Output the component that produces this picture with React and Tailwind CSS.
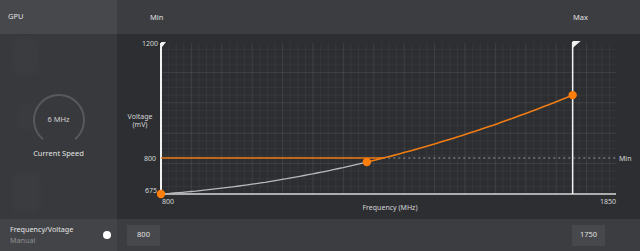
import React from "react";

const FONT = { fontFamily: '"Noto Sans", "Liberation Sans", Arial, sans-serif' };

// chart geometry (px inside the chart panel)
const X0 = 44;
const X1 = 499;
const Y0 = 160;
const Y1 = 9;
const fx = (f) => X0 + ((f - 800) / 1050) * (X1 - X0);
const vy = (v) => Y0 - ((v - 675) / 525) * (Y0 - Y1);
const volt = (f) => {
  const d = f - 800;
  return 675 + 0.1054 * d + 0.00027 * d * d;
};

function curvePoints(from, to) {
  const pts = [];
  for (let f = from; f <= to + 0.1; f += 10) {
    pts.push(`${fx(f).toFixed(1)},${vy(volt(f)).toFixed(1)}`);
  }
  return pts.join(" ");
}

function Grid() {
  const lines = [];
  const step = 7.6;
  let i = 0;
  for (let x = X0 + step; x < X1; x += step, i++) {
    lines.push(
      <line key={"v" + i} x1={x} y1={Y1} x2={x} y2={Y0} stroke="#ffffff" strokeOpacity={i % 4 === 3 ? 0.085 : 0.045} strokeWidth="1" />
    );
  }
  i = 0;
  for (let y = Y0 - step; y > Y1; y -= step, i++) {
    lines.push(
      <line key={"h" + i} x1={X0} y1={y} x2={X1} y2={y} stroke="#ffffff" strokeOpacity={i % 4 === 3 ? 0.085 : 0.045} strokeWidth="1" />
    );
  }
  return <g>{lines}</g>;
}

function Chart() {
  const pMid = { x: fx(1275), y: vy(volt(1275)) };
  const pMax = { x: fx(1750), y: vy(volt(1750)) };
  const minY = vy(800);
  const cross = fx(1313);
  return (
    <svg width="523" height="185" viewBox="0 0 523 185" style={FONT}>
      <Grid />
      {/* axes */}
      <line x1={X0} y1={Y1} x2={X0} y2={Y0 + 1} stroke="#f2f2f2" strokeWidth="2" />
      <line x1={X0} y1={Y0} x2={X1} y2={Y0} stroke="#d8d8d8" strokeWidth="1.5" />
      <polygon points={`${X0},${Y1 - 1} ${X0 + 5},${Y1 - 1} ${X0 + 1},${Y1 + 4}`} fill="#f2f2f2" />
      {/* max line */}
      <line x1={pMax.x} y1={Y1 - 1} x2={pMax.x} y2={Y0} stroke="#f2f2f2" strokeWidth="1.5" />
      <polygon points={`${pMax.x},${Y1 - 2} ${pMax.x + 8},${Y1 - 2} ${pMax.x},${Y1 + 5}`} fill="#f2f2f2" />
      {/* min voltage line */}
      <line x1={X0} y1={minY} x2={cross} y2={minY} stroke="#f07d14" strokeWidth="1.5" />
      <line x1={cross} y1={minY} x2={X1} y2={minY} stroke="#9a9ca0" strokeWidth="1" strokeDasharray="2 3" />
      {/* curve */}
      <polyline points={curvePoints(800, 1275)} fill="none" stroke="#b8b9bc" strokeWidth="1.3" />
      <polyline points={curvePoints(1275, 1750)} fill="none" stroke="#f07d14" strokeWidth="1.6" />
      <circle cx={X0} cy={Y0} r="4.2" fill="#ff7f0a" />
      <circle cx={pMid.x} cy={pMid.y} r="4.2" fill="#ff7f0a" />
      <circle cx={pMax.x} cy={pMax.y} r="4.2" fill="#ff7f0a" />
      {/* labels */}
      <g fill="#d6d6d6" fontSize="7">
        <text x={X0 - 3} y={Y1 + 3} textAnchor="end">1200</text>
        <text x={X0 - 5} y={minY + 2.5} textAnchor="end">800</text>
        <text x={X0 - 4} y={Y0 - 1} textAnchor="end">675</text>
        <text x="23" y="85" textAnchor="middle">Voltage</text>
        <text x="23" y="93" textAnchor="middle">(mV)</text>
        <text x={X0 + 1} y="170">800</text>
        <text x={X1} y="170" textAnchor="end">1850</text>
        <text x="273" y="176" textAnchor="middle">Frequency (MHz)</text>
        <text x={X1 + 3} y={minY + 2.5}>Min</text>
      </g>
    </svg>
  );
}

function Gauge() {
  // open arc, gap at the bottom
  const r = 25;
  const a0 = (130 * Math.PI) / 180;
  const a1 = (50 * Math.PI) / 180;
  const sx = 30 + r * Math.cos(a0);
  const sy = 30 + r * Math.sin(a0);
  const ex = 30 + r * Math.cos(a1);
  const ey = 30 + r * Math.sin(a1);
  return (
    <svg width="60" height="60" viewBox="0 0 60 60" className="absolute inset-0">
      <path d={`M ${sx} ${sy} A ${r} ${r} 0 1 1 ${ex} ${ey}`} fill="none" stroke="#58595d" strokeWidth="2" />
    </svg>
  );
}

export default function App() {
  return (
    <div className="w-[640px] h-[251px] flex flex-col bg-[#2c2e32] text-[#d8d8d8] overflow-hidden" style={FONT}>
      {/* header */}
      <div className="h-[34px] flex">
        <div className="w-[117px] bg-[#47484c] flex items-center px-2 text-[7.5px] text-[#e0e0e0]">GPU</div>
        <div className="flex-1 bg-[#3c3d41] relative text-[7.5px] text-[#e0e0e0]">
          <span className="absolute left-[33px] top-[12px]">Min</span>
          <span className="absolute left-[456px] top-[12px]">Max</span>
        </div>
      </div>

      {/* body */}
      <div className="h-[185px] flex">
        <div className="w-[117px] bg-[#38393d] relative flex flex-col items-center pt-[56px]">
          <div className="absolute left-[13px] top-[4px] w-[26px] h-[36px] bg-white/[0.018] blur-[4px]" />
          <div className="absolute left-[15px] top-[68px] w-[22px] h-[30px] bg-white/[0.012] blur-[4px]" />
          <div className="absolute left-[12px] top-[140px] w-[28px] h-[38px] bg-white/[0.018] blur-[4px]" />
          <div className="relative w-[60px] h-[60px] flex items-center justify-center">
            <Gauge />
            <span className="text-[7.5px] text-[#cfcfcf]">6 MHz</span>
          </div>
          <div className="mt-[-2px] text-[7.5px] text-[#e2e2e2]">Current Speed</div>
        </div>
        <div className="flex-1">
          <Chart />
        </div>
      </div>

      {/* footer */}
      <div className="flex-1 flex">
        <div className="w-[117px] bg-[#434448] flex items-center justify-between pl-[10px] pr-[6px]">
          <div className="flex flex-col leading-[11px]">
            <span className="text-[7.2px] text-[#e4e4e4]">Frequency/Voltage</span>
            <span className="text-[7.2px] text-[#8e8f92]">Manual</span>
          </div>
          <div className="w-[8px] h-[8px] rounded-full bg-white" />
        </div>
        <div className="flex-1 bg-[#3c3d41] flex items-center justify-between pl-[10px] pr-[35px]">
          <div className="w-[33px] h-[21px] bg-[#47484c] flex items-center justify-center text-[7.5px] text-[#e0e0e0]">800</div>
          <div className="w-[33px] h-[21px] bg-[#47484c] flex items-center justify-center text-[7.5px] text-[#e0e0e0]">1750</div>
        </div>
      </div>
    </div>
  );
}
